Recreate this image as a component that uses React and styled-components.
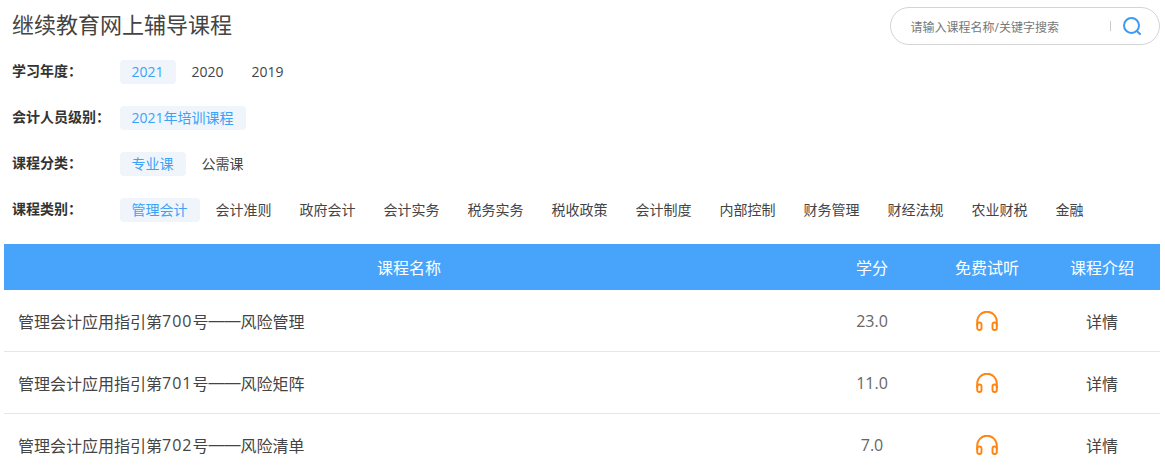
import React from "react";
import styled, { createGlobalStyle } from "styled-components";

const years = ["2021", "2020", "2019"];
const levels = ["2021年培训课程"];
const kinds = ["专业课", "公需课"];
const types = ["管理会计", "会计准则", "政府会计", "会计实务", "税务实务", "税收政策", "会计制度", "内部控制", "财务管理", "财经法规", "农业财税", "金融"];

const courses = [
  { no: "700", title: "风险管理", credit: "23.0" },
  { no: "701", title: "风险矩阵", credit: "11.0" },
  { no: "702", title: "风险清单", credit: "7.0" },
];

const Headphones = () => (
  <svg width="22" height="20" viewBox="0 0 22 20" fill="none" stroke="#ff8512" strokeWidth="1.9">
    <path d="M1.2 15V10.5a9.8 9.8 0 0 1 19.6 0V15" />
    <rect x="1.2" y="11.5" width="4.3" height="7.5" rx="2" />
    <rect x="16.5" y="11.5" width="4.3" height="7.5" rx="2" />
  </svg>
);

const SearchIcon = () => (
  <svg width="20" height="20" viewBox="0 0 20 20" fill="none" stroke="#3b9af5" strokeWidth="2">
    <circle cx="9.5" cy="9.5" r="7.5" />
    <path d="M14.8 15l3.2 3" strokeLinecap="round" />
  </svg>
);

const FilterRow = ({ label, items }) => (
  <Row>
    <Label>{label}：</Label>
    <Pills>
      {items.map((item, i) => (
        <Pill key={item} active={i === 0}>{item}</Pill>
      ))}
    </Pills>
  </Row>
);

const App = () => {
  return (
    <Page>
      <GlobalStyle />
      <Header>
        <Title>继续教育网上辅导课程</Title>
        <SearchBox>
          <Placeholder>请输入课程名称/关键字搜索</Placeholder>
          <Divider />
          <SearchIcon />
        </SearchBox>
      </Header>
      <Filters>
        <FilterRow label="学习年度" items={years} />
        <FilterRow label="会计人员级别" items={levels} />
        <FilterRow label="课程分类" items={kinds} />
        <FilterRow label="课程类别" items={types} />
      </Filters>
      <Table>
        <HeadRow>
          <Cell>课程名称</Cell>
          <Cell>学分</Cell>
          <Cell>免费试听</Cell>
          <Cell>课程介绍</Cell>
        </HeadRow>
        {courses.map((c) => (
          <BodyRow key={c.no}>
            <NameCell>
              管理会计应用指引第<CourseNo>{c.no}</CourseNo>号<Dash>——</Dash>{c.title}
            </NameCell>
            <CreditCell>{c.credit}</CreditCell>
            <Cell><Headphones /></Cell>
            <Cell>详情</Cell>
          </BodyRow>
        ))}
      </Table>
    </Page>
  );
};

const GlobalStyle = createGlobalStyle`
  html, body {
    margin: 0;
    padding: 0;
    background: #fff;
    overflow: hidden;
  }
  body {
    font-family: "Open Sans", "Noto Sans CJK SC", sans-serif;
    color: #333;
  }
`;

const Page = styled.div`
  width: 1165px;
  height: 471px;
  overflow: hidden;
`;

const Header = styled.div`
  height: 60px;
  display: flex;
  justify-content: space-between;
  align-items: flex-start;
  padding: 7px 5px 0 12px;
  box-sizing: border-box;
`;

const Title = styled.h1`
  margin: 0;
  font-size: 22px;
  font-weight: 400;
  line-height: 34px;
  color: #444;
`;

const SearchBox = styled.div`
  width: 270px;
  height: 38px;
  box-sizing: border-box;
  border: 1px solid #d4d4d4;
  border-radius: 19px;
  display: flex;
  align-items: center;
  padding: 0 17px 0 19.5px;
`;

const Placeholder = styled.span`
  flex: 1;
  font-size: 12px;
  padding-top: 1px;
  color: #777;
`;

const Divider = styled.span`
  width: 1px;
  height: 10px;
  background: #ccc;
  margin-right: 11px;
`;

const Filters = styled.div`
  display: flex;
  flex-direction: column;
  gap: 22px;
  padding-left: 12px;
`;

const Row = styled.div`
  display: flex;
  align-items: center;
  height: 24px;
`;

const Label = styled.div`
  width: 108px;
  font-size: 14px;
  font-weight: 700;
  line-height: 22px;
  margin-bottom: 2px;
  color: #333;
`;

const Pills = styled.div`
  display: flex;
  gap: 4px;
`;

const Pill = styled.div`
  height: 24px;
  line-height: 23px;
  padding: 0 12.5px 0 11.5px;
  border-radius: 4px;
  font-size: 14px;
  background: ${(props) => (props.active ? "#eff5fb" : "transparent")};
  color: ${(props) => (props.active ? "#3ba2f8" : "#444")};
`;

const Table = styled.div`
  margin: 22px 5px 0 4px;
`;

const HeadRow = styled.div`
  display: grid;
  grid-template-columns: 1fr 115px 115px 115px;
  height: 46px;
  background: #48a4fb;
  color: #fff;
  font-size: 16px;
`;

const BodyRow = styled.div`
  display: grid;
  grid-template-columns: 1fr 115px 115px 115px;
  height: 62px;
  box-sizing: border-box;
  border-bottom: 1px solid #e6e6e6;
  font-size: 16px;
  color: #444;
`;

const Cell = styled.div`
  display: flex;
  align-items: center;
  justify-content: center;
  padding-right: 1px;
`;

const NameCell = styled(Cell)`
  justify-content: flex-start;
  padding-left: 14px;
  padding-top: 1px;
`;

const CourseNo = styled.span`
  letter-spacing: 1px;
`;

const Dash = styled.span`
  font-family: "Liberation Sans", sans-serif;
`;

const CreditCell = styled(Cell)`
  color: #666;
`;

export default App;
